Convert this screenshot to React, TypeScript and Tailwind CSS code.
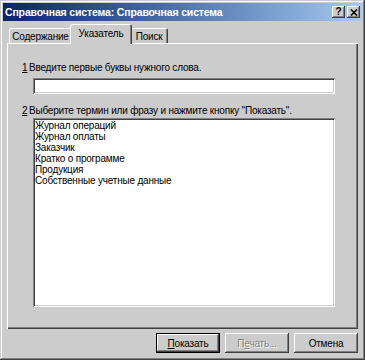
import React from 'react';

const raised =
  'shadow-[inset_-1px_-1px_#404040,inset_1px_1px_#ffffff,inset_-2px_-2px_#808080,inset_2px_2px_#cccccc]';
const sunken =
  'shadow-[inset_1px_1px_#808080,inset_-1px_-1px_#ffffff,inset_2px_2px_#404040,inset_-2px_-2px_#cccccc]';

const terms = [
  'Журнал операций',
  'Журнал оплаты',
  'Заказчик',
  'Кратко о программе',
  'Продукция',
  'Собственные учетные данные',
];

function CaptionButton({ children }: { children: React.ReactNode }) {
  return (
    <div
      className={`flex h-[12px] w-[13px] items-center justify-center bg-[#cccccc] ${raised}`}
    >
      {children}
    </div>
  );
}

function Tab({ label, active, width }: { label: string; active?: boolean; width: string }) {
  if (active) {
    return (
      <div
        className={`relative z-10 -mx-[2px] -mb-px flex h-[20px] items-start justify-center rounded-t-[2px] bg-[#cccccc] pt-[4px] shadow-[inset_1px_1px_#ffffff,inset_-1px_0_#404040,inset_-2px_0_#808080] ${width}`}
      >
        {label}
      </div>
    );
  }
  return (
    <div
      className={`flex h-[15px] items-center justify-center rounded-t-[2px] bg-[#cccccc] pt-px shadow-[inset_1px_1px_#ffffff,inset_-1px_0_#404040,inset_-2px_0_#808080] ${width}`}
    >
      {label}
    </div>
  );
}

function Button({
  children,
  primary,
  disabled,
}: {
  children: React.ReactNode;
  primary?: boolean;
  disabled?: boolean;
}) {
  return (
    <div
      className={`flex h-[20px] w-[64px] items-center justify-center bg-[#cccccc] ${
        primary
          ? 'shadow-[inset_0_0_0_1px_#000000,inset_-2px_-2px_#404040,inset_2px_2px_#ffffff,inset_-3px_-3px_#808080]'
          : raised
      } ${disabled ? 'text-[#808080] [text-shadow:1px_1px_0_#ffffff]' : 'text-black'}`}
    >
      {children}
    </div>
  );
}

export default function App() {
  return (
    <div
      className={`flex h-[360px] w-[365px] flex-col bg-[#cccccc] p-[3px] text-[10px] leading-[11px] tracking-[-0.2px] text-black shadow-[inset_-1px_-1px_#404040,inset_1px_1px_#cccccc,inset_-2px_-2px_#808080,inset_2px_2px_#ffffff] font-['Liberation_Sans',Arial,sans-serif]`}
    >
      <div className="flex h-[18px] items-center justify-between bg-linear-to-r from-[#0a246a] to-[#a6caf0] pl-[2px] pr-[2px]">
        <span className="text-[10.5px] font-bold tracking-[-0.15px] text-white">
          Справочная система: Справочная система
        </span>
        <div className="flex gap-[2px]">
          <CaptionButton>
            <span className="text-[10px] font-bold leading-none">?</span>
          </CaptionButton>
          <CaptionButton>
            <svg width="8" height="7" viewBox="0 0 8 7">
              <path d="M1 0.5 L7 6.5 M7 0.5 L1 6.5" stroke="#000" strokeWidth="1.6" />
            </svg>
          </CaptionButton>
        </div>
      </div>

      <div className="ml-[4px] mr-[4px] mt-[3px] flex flex-col">
        <div className="flex items-end pl-[2px]">
          <Tab label="Содержание" width="w-[63px]" />
          <Tab label="Указатель" active width="w-[62px]" />
          <Tab label="Поиск" width="w-[38px]" />
        </div>
        <div className="flex h-[286px] flex-col bg-[#cccccc] pl-[15px] pr-[23px] pt-[18px] shadow-[inset_1px_1px_#ffffff,inset_-1px_-1px_#404040,inset_-2px_-2px_#808080]">
          <div className="flex h-[12px] items-center">
            <span className="w-[7px] underline">1</span>
            <span>Введите первые буквы нужного слова.</span>
          </div>
          <div className={`ml-[11px] mt-[5px] h-[16px] bg-white ${sunken}`} />
          <div className="mt-[10px] flex h-[12px] items-center">
            <span className="w-[7px] underline">2</span>
            <span>Выберите термин или фразу и нажмите кнопку "Показать".</span>
          </div>
          <div className={`ml-[11px] mt-[2px] flex h-[189px] flex-col bg-white px-[2px] pt-[2px] ${sunken}`}>
            {terms.map((t) => (
              <div key={t} className="h-[11px] leading-[11px]">
                {t}
              </div>
            ))}
          </div>
        </div>
        <div className="mt-[4px] flex justify-end gap-[5px]">
          <Button primary>
            <span>
              <span className="underline">П</span>оказать
            </span>
          </Button>
          <Button disabled>
            <span>
              П<span className="underline">е</span>чать...
            </span>
          </Button>
          <Button>Отмена</Button>
        </div>
      </div>
    </div>
  );
}
